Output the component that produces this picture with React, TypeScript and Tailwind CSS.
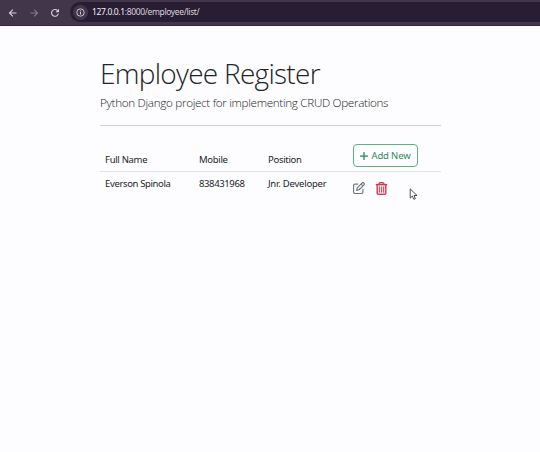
import { FaPlus, FaRegPenToSquare, FaRegTrashCan } from "react-icons/fa6";

function BrowserBar() {
  return (
    <header className="flex h-[26px] items-start overflow-hidden border-b border-[#33263c] bg-[#41364a] pl-[8px] text-[#d6cfdc]">
      <div className="flex h-[25px] items-center gap-[11px] pr-[10px]">
        <svg className="size-[10px]" viewBox="0 0 10 10" fill="none" stroke="currentColor" strokeWidth="1.1">
          <path d="M8.5 5H1.5M4.8 1.7 1.5 5l3.3 3.3" />
        </svg>
        <svg className="size-[10px] text-[#85798f]" viewBox="0 0 10 10" fill="none" stroke="currentColor" strokeWidth="1.1">
          <path d="M1.5 5h7M5.2 1.7 8.5 5 5.2 8.3" />
        </svg>
        <svg className="size-[10px]" viewBox="0 0 10 10" fill="none" stroke="currentColor" strokeWidth="1.1">
          <path d="M8.3 5.6A3.4 3.4 0 1 1 7.5 2.6L8.4 3.7M8.5 1.2v2.6H5.9" />
        </svg>
      </div>
      <div className="mt-[2px] flex h-[20px] flex-1 items-center rounded-l-full bg-[#291d33] pl-[3px]">
        <span className="flex size-[15px] items-center justify-center rounded-full bg-[#41364a]">
          <svg className="size-[9px]" viewBox="0 0 9 9" fill="none" stroke="currentColor">
            <circle cx="4.5" cy="4.5" r="3.7" strokeWidth="0.9" />
            <path d="M4.5 4.1v2.4M4.5 2.4v1" strokeWidth="1" />
          </svg>
        </span>
        <span className="mt-px ml-[4px] font-['Noto_Sans',sans-serif] text-[8.5px] leading-none tracking-[-0.36px] text-[#d9d1df]">
          <span className="text-[#f3eff6]">127.0.0.1</span>:8000/employee/list/
        </span>
      </div>
    </header>
  );
}

export default function App() {
  return (
    <div className="h-[452px] overflow-hidden bg-[#fdfcfe] font-['Open_Sans','Noto_Sans',sans-serif] text-[#212529]">
      <BrowserBar />
      <main className="ml-[100px] w-[341px] pt-[29px]">
        <h1 className="h-[36px] text-[28px] leading-[36px] font-light tracking-[-0.72px] whitespace-nowrap">Employee Register</h1>
        <p className="mt-[3px] h-[16px] text-[11.7px] leading-[16px] font-light tracking-[-0.32px] whitespace-nowrap">
          Python Django project for implementing CRUD Operations
        </p>
        <hr className="mt-[15px] border-[#d0d0d2]" />
        <table className="mt-[13px] w-full table-fixed border-collapse text-left font-['Noto_Sans',sans-serif] text-[9.5px] leading-[14px] tracking-[-0.3px] whitespace-nowrap">
          <colgroup>
            <col className="w-[94px]" />
            <col className="w-[69px]" />
            <col className="w-[85px]" />
            <col />
          </colgroup>
          <thead>
            <tr className="h-[32px] border-b border-[#e2e3e6]">
              <th className="pb-[4px] pl-[5px] align-bottom font-normal">Full Name</th>
              <th className="pb-[4px] pl-[5px] align-bottom font-normal">Mobile</th>
              <th className="pb-[4px] pl-[5px] align-bottom font-normal">Position</th>
              <th className="pb-[4px] pl-[5px] align-bottom font-normal">
                <button className="flex h-[23px] w-[65px] items-center justify-center gap-[2px] rounded-[4px] border border-[#62b07f] pt-px pr-px tracking-[-0.15px] text-[#37885f]">
                  <FaPlus className="size-[10px] stroke-current stroke-[8px]" />
                  Add New
                </button>
              </th>
            </tr>
          </thead>
          <tbody>
            <tr className="h-[32px]">
              <td className="pt-[5px] pl-[5px] align-top tracking-[-0.36px]">Everson Spinola</td>
              <td className="pt-[5px] pl-[5px] align-top tracking-[-0.38px]">838431968</td>
              <td className="pt-[5px] pl-[5px] align-top tracking-[-0.22px]">Jnr. Developer</td>
              <td className="pt-[10px] pl-[5px] align-top">
                <div className="flex items-center">
                  <FaRegPenToSquare className="size-[12px] text-[#6c757d]" />
                  <FaRegTrashCan className="ml-[10px] size-[13px] stroke-current stroke-[10px] text-[#cf3b50]" />
                </div>
              </td>
            </tr>
          </tbody>
        </table>
      </main>
      <svg className="absolute top-[188px] left-[409px] h-[13px] w-[9px]" viewBox="0 0 9 13" fill="#fff" stroke="#3b3b40" strokeWidth="0.9">
        <path d="M1.2.9v9.2l2.2-2 1.4 3.2 1.6-.6-1.4-3.2h3z" />
      </svg>
    </div>
  );
}
